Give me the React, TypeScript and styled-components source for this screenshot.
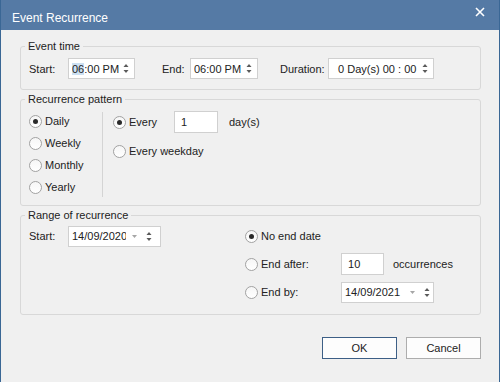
import styled, { createGlobalStyle } from 'styled-components'

const Global = createGlobalStyle`
    html, body {
        margin: 0;
        padding: 0;
        background: #f0f0f0;
    }
    * {
        box-sizing: border-box;
    }
`

const Window = styled.div`
    width: 500px;
    height: 382px;
    display: flex;
    flex-direction: column;
    background: #f0f0f0;
    border-left: 1px solid #3a6795;
    border-right: 1px solid #3a6795;
    font-family: 'Liberation Sans', Arial, sans-serif;
    font-size: 11px;
    color: #222;
`

const TitleBar = styled.div`
    height: 30px;
    flex-shrink: 0;
    background: #557aa5;
    display: flex;
    justify-content: space-between;
    align-items: flex-start;
    color: #fff;
`

const TitleText = styled.div`
    font-size: 12px;
    padding: 11px 0 0 11px;
`

const CloseIcon = styled.svg`
    margin: 7px 14px 0 0;
`

const Body = styled.div`
    flex: 1;
    display: flex;
    flex-direction: column;
    padding: 9px 18px 0 19px;
`

const Group = styled.fieldset<{ $pt: number; $pb: number; $mt?: number }>`
    margin: ${(p) => p.$mt ?? 0}px 0 0 0;
    min-width: 0;
    border: 1px solid #d8d8d8;
    border-radius: 3px;
    padding: ${(p) => p.$pt}px 8px ${(p) => p.$pb}px 8px;
`

const Legend = styled.legend`
    margin-left: -4px;
    padding: 0 3px;
    line-height: 14px;
    font-size: 11px;
`

const Row = styled.div<{ $h?: number }>`
    display: flex;
    align-items: center;
    height: ${(p) => p.$h ?? 21}px;
`

const Label = styled.span<{ $w?: number; $ml?: number }>`
    display: inline-block;
    width: ${(p) => (p.$w ? `${p.$w}px` : 'auto')};
    margin-left: ${(p) => p.$ml ?? 0}px;
    white-space: pre;
    flex-shrink: 0;
`

const Field = styled.div<{ $w: number; $h?: number }>`
    width: ${(p) => p.$w}px;
    height: ${(p) => p.$h ?? 21}px;
    flex-shrink: 0;
    background: #fff;
    border: 1px solid #d0d0d0;
    display: flex;
    align-items: center;
    padding-left: 3px;
    white-space: pre;
    overflow: hidden;
`

const FieldText = styled.span<{ $w?: number }>`
    flex: ${(p) => (p.$w ? '0 0 auto' : '1')};
    width: ${(p) => (p.$w ? `${p.$w}px` : 'auto')};
    overflow: hidden;
    white-space: pre;
`

const Selected = styled.span`
    background: #cce0f2;
`

const DropArrow = styled.svg`
    margin: 0 9px 0 6px;
    flex-shrink: 0;
`

const SpinIcon = styled.svg`
    margin-right: 5px;
    flex-shrink: 0;
`

const RadioRow = styled.label<{ $w?: number }>`
    display: flex;
    align-items: center;
    width: ${(p) => (p.$w ? `${p.$w}px` : 'auto')};
    flex-shrink: 0;
    gap: 3px;
`

const RadioCircle = styled.span<{ $on?: boolean }>`
    width: 13px;
    height: 13px;
    border-radius: 50%;
    border: 1px solid #a2a2a2;
    background: linear-gradient(#f6f6f6, #ffffff);
    display: flex;
    align-items: center;
    justify-content: center;
    flex-shrink: 0;

    &::after {
        content: '';
        width: 5px;
        height: 5px;
        border-radius: 50%;
        background: ${(p) => (p.$on ? '#2a2a2a' : 'transparent')};
    }
`

const PatternGrid = styled.div`
    display: flex;
`

const PeriodColumn = styled.div`
    width: 73px;
    display: flex;
    flex-direction: column;
`

const Separator = styled.div`
    width: 1px;
    background: #d4d4d4;
    margin: 2px 10px 1px 0;
`

const OptionColumn = styled.div`
    display: flex;
    flex-direction: column;
    gap: 6px;
`

const RangeGrid = styled.div`
    display: flex;
`

const RangeLeft = styled.div`
    width: 216px;
    flex-shrink: 0;
`

const RangeRight = styled.div`
    display: flex;
    flex-direction: column;
    gap: 6px;
`

const ButtonBar = styled.div`
    display: flex;
    justify-content: flex-end;
    gap: 9px;
    margin-top: 22px;
`

const Button = styled.button<{ $default?: boolean }>`
    width: 75px;
    height: 22px;
    background: #fdfdfd;
    border: 1px solid ${(p) => (p.$default ? '#3d5f86' : '#adadad')};
    font-family: 'Liberation Sans', Arial, sans-serif;
    font-size: 11px;
    color: #222;
    padding: 0;
`

const Spin = () => (
    <SpinIcon width="6" height="11" viewBox="0 0 6 11">
        <path d="M3 1 L5.5 4 L0.5 4 Z" fill="#5a5a5a" />
        <path d="M0.5 7 L5.5 7 L3 10 Z" fill="#5a5a5a" />
    </SpinIcon>
)

const Drop = () => (
    <DropArrow width="5" height="3" viewBox="0 0 5 3">
        <path d="M0 0 L5 0 L2.5 3 Z" fill="#a6a6a6" />
    </DropArrow>
)

const Radio = ({ on, label, w }: { on?: boolean; label: string; w?: number }) => (
    <RadioRow $w={w}>
        <RadioCircle $on={on} />
        <span>{label}</span>
    </RadioRow>
)

const DateField = ({ value, textW }: { value: string; textW: number }) => (
    <Field $w={93}>
        <FieldText $w={textW}>{value}</FieldText>
        <Drop />
        <Spin />
    </Field>
)

export default function App() {
    return (
        <>
            <Global />
            <Window>
                <TitleBar>
                    <TitleText>Event Recurrence</TitleText>
                    <CloseIcon width="10" height="10" viewBox="0 0 10 10">
                        <path d="M1 1 L9 9 M9 1 L1 9" stroke="#fff" strokeWidth="1.6" />
                    </CloseIcon>
                </TitleBar>
                <Body>
                    <Group $pt={5} $pb={10}>
                        <Legend>Event time</Legend>
                        <Row>
                            <Label $w={39}>Start:</Label>
                            <Field $w={67}>
                                <FieldText>
                                    <Selected>06</Selected>:00 PM
                                </FieldText>
                                <Spin />
                            </Field>
                            <Label $w={28} $ml={27}>End:</Label>
                            <Field $w={68}>
                                <FieldText>06:00 PM</FieldText>
                                <Spin />
                            </Field>
                            <Label $w={48} $ml={22}>Duration:</Label>
                            <Field $w={106}>
                                <FieldText>{'  0 Day(s) 00 : 00'}</FieldText>
                                <Spin />
                            </Field>
                        </Row>
                    </Group>

                    <Group $pt={4} $pb={7} $mt={2}>
                        <Legend>Recurrence pattern</Legend>
                        <PatternGrid>
                            <PeriodColumn>
                                <Row $h={22}>
                                    <Radio on label="Daily" />
                                </Row>
                                <Row $h={22}>
                                    <Radio label="Weekly" />
                                </Row>
                                <Row $h={22}>
                                    <Radio label="Monthly" />
                                </Row>
                                <Row $h={22}>
                                    <Radio label="Yearly" />
                                </Row>
                            </PeriodColumn>
                            <Separator />
                            <OptionColumn>
                                <Row $h={24}>
                                    <Radio on label="Every" w={61} />
                                    <Field $w={44} $h={22}>
                                        <FieldText>{' 1'}</FieldText>
                                    </Field>
                                    <Label $ml={11}>day(s)</Label>
                                </Row>
                                <Row $h={22}>
                                    <Radio label="Every weekday" />
                                </Row>
                            </OptionColumn>
                        </PatternGrid>
                    </Group>

                    <Group $pt={3} $pb={11} $mt={2}>
                        <Legend>Range of recurrence</Legend>
                        <RangeGrid>
                            <RangeLeft>
                                <Row $h={22}>
                                    <Label $w={39}>Start:</Label>
                                    <DateField value="14/09/2020" textW={54} />
                                </Row>
                            </RangeLeft>
                            <RangeRight>
                                <Row $h={22}>
                                    <Radio on label="No end date" />
                                </Row>
                                <Row $h={22}>
                                    <Radio label="End after:" w={96} />
                                    <Field $w={43} $h={22}>
                                        <FieldText>{' 10'}</FieldText>
                                    </Field>
                                    <Label $ml={9}>occurrences</Label>
                                </Row>
                                <Row $h={22}>
                                    <Radio label="End by:" w={96} />
                                    <DateField value="14/09/2021" textW={59} />
                                </Row>
                            </RangeRight>
                        </RangeGrid>
                    </Group>

                    <ButtonBar>
                        <Button $default>OK</Button>
                        <Button>Cancel</Button>
                    </ButtonBar>
                </Body>
            </Window>
        </>
    )
}
